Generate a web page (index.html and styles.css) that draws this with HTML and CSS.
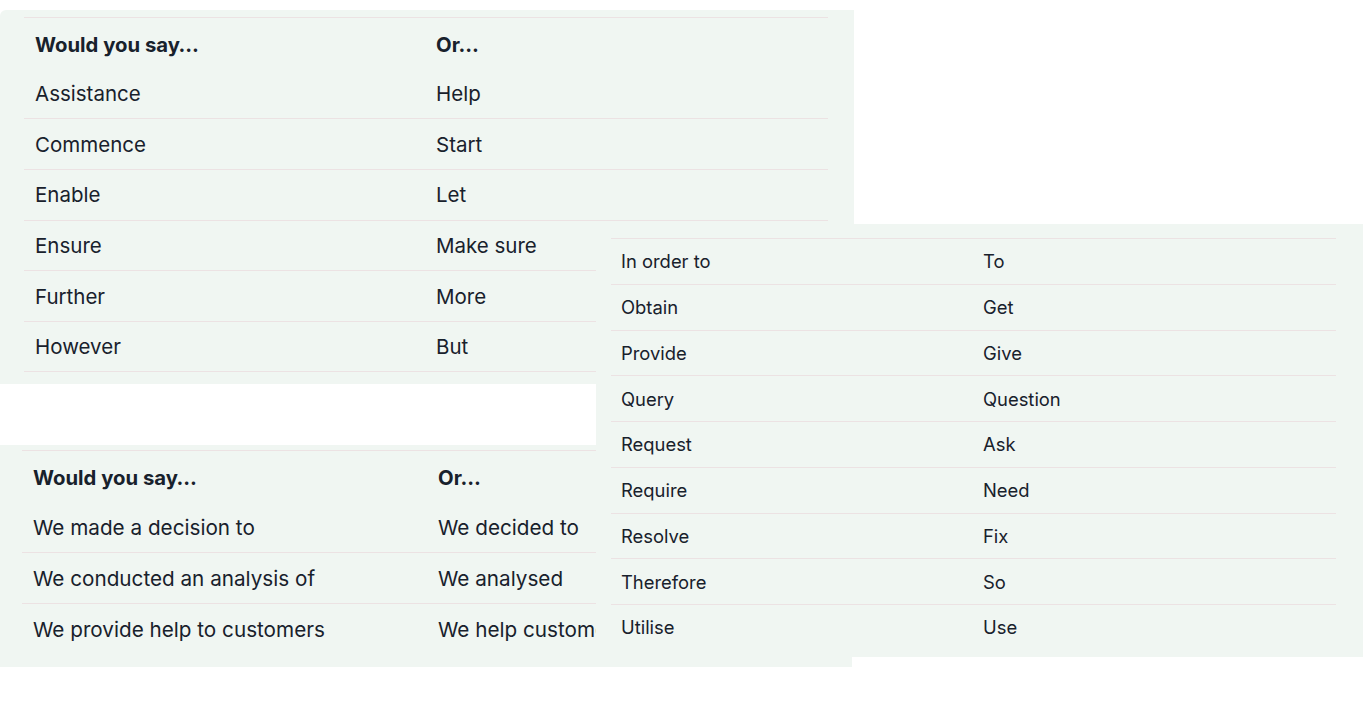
FILE: index.html
```html
<!DOCTYPE html>
<html lang="en">
<head>
<meta charset="utf-8">
<title>Plain words</title>
<link rel="stylesheet" href="styles.css">
</head>
<body>
<div class="canvas">
  <section class="card card-a">
    <div class="table table-big">
      <div class="row head"><span>Would you say…</span><span>Or…</span></div>
      <div class="row first"><span>Assistance</span><span>Help</span></div>
      <div class="row"><span>Commence</span><span>Start</span></div>
      <div class="row"><span>Enable</span><span>Let</span></div>
      <div class="row"><span>Ensure</span><span>Make sure</span></div>
      <div class="row"><span>Further</span><span>More</span></div>
      <div class="row last-ruled"><span>However</span><span>But</span></div>
    </div>
  </section>

  <section class="card card-b">
    <div class="table table-big">
      <div class="row head"><span>Would you say…</span><span>Or…</span></div>
      <div class="row first"><span>We made a decision to</span><span>We decided to</span></div>
      <div class="row"><span>We conducted an analysis of</span><span>We analysed</span></div>
      <div class="row"><span>We provide help to customers</span><span>We help customers</span></div>
    </div>
  </section>

  <section class="card card-c">
    <div class="table table-small">
      <div class="row"><span>In order to</span><span>To</span></div>
      <div class="row"><span>Obtain</span><span>Get</span></div>
      <div class="row"><span>Provide</span><span>Give</span></div>
      <div class="row"><span>Query</span><span>Question</span></div>
      <div class="row"><span>Request</span><span>Ask</span></div>
      <div class="row"><span>Require</span><span>Need</span></div>
      <div class="row"><span>Resolve</span><span>Fix</span></div>
      <div class="row"><span>Therefore</span><span>So</span></div>
      <div class="row"><span>Utilise</span><span>Use</span></div>
    </div>
  </section>
</div>
</body>
</html>
```

FILE: styles.css
```css
* { box-sizing: border-box; }

html, body {
  margin: 0;
  padding: 0;
  background: #ffffff;
}

body {
  font-family: Inter, "Noto Sans", "Liberation Sans", sans-serif;
  color: #18212c;
}

.canvas {
  position: relative;
  width: 1363px;
  height: 717px;
  overflow: hidden;
}

.card {
  position: absolute;
  background: #f0f6f2;
}

.card-a {
  left: 0;
  top: 10px;
  width: 854px;
  height: 374px;
  padding: 7px 26px 0 24px;
  border-top-left-radius: 6px;
}

.card-b {
  left: 0;
  top: 445px;
  width: 852px;
  height: 222px;
  padding: 5px 0 0 22px;
}

.card-c {
  left: 596px;
  top: 224px;
  width: 767px;
  height: 433px;
  padding: 14px 27px 0 15px;
  z-index: 2;
}

.table {
  display: flex;
  flex-direction: column;
}

.row {
  display: grid;
  align-items: center;
  border-top: 1px solid #ece2e3;
}

.table-big .row {
  grid-template-columns: 401px 1fr;
  height: 50.7px;
  font-size: 20.5px;
  padding-left: 11px;
}

.card-b .table-big .row {
  grid-template-columns: 405px 1fr;
  height: 51px;
  width: 830px;
  font-size: 20.7px;
}

.table-big .row.head,
.card-b .table-big .row.head {
  font-weight: 700;
  font-size: 20.3px;
  padding-top: 3px;
}

.table-big .row.first {
  border-top-color: transparent;
}

.table-big .row.last-ruled {
  border-bottom: 1px solid #ece2e3;
}

.table-small .row {
  grid-template-columns: 362px 1fr;
  height: 45.75px;
  font-size: 18.4px;
  padding-left: 10px;
}

.row span {
  white-space: nowrap;
}
```
